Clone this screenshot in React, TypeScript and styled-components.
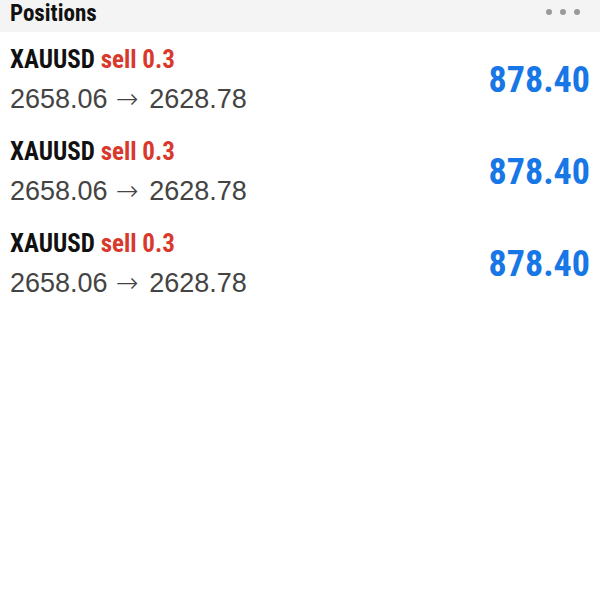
import React from "react";
import styled, { createGlobalStyle } from "styled-components";

const Global = createGlobalStyle`
  html, body { margin: 0; padding: 0; background: #ffffff; }
  body { font-family: "Liberation Sans", Arial, sans-serif; }
`;

const condensed = `"Roboto Condensed", Roboto, "Liberation Sans", sans-serif`;

const Page = styled.div`
  width: 600px;
  min-height: 600px;
  background: #ffffff;
`;

const Header = styled.div`
  height: 32px;
  background: #f4f4f4;
  display: flex;
  align-items: center;
  justify-content: space-between;
  padding: 0 10px;
  box-sizing: border-box;
`;

const Title = styled.div`
  font-family: ${condensed};
  font-stretch: 75%;
  font-weight: 700;
  font-size: 23px;
  line-height: 26px;
  color: #111;
  margin-top: -5px;
`;

const Dots = styled.div`
  display: flex;
  gap: 8px;
  margin-top: -8px;
  padding-right: 10px;
`;

const Dot = styled.span`
  width: 6px;
  height: 6px;
  border-radius: 50%;
  background: #9a9a9a;
`;

const List = styled.div`
  display: flex;
  flex-direction: column;
  padding-top: 12px;
`;

const Row = styled.div`
  height: 92px;
  display: flex;
  align-items: flex-start;
  justify-content: space-between;
  padding: 0 10px;
`;

const Info = styled.div`
  display: flex;
  flex-direction: column;
`;

const Line1 = styled.div`
  font-family: ${condensed};
  font-stretch: 75%;
  font-weight: 700;
  font-size: 25px;
  line-height: 32px;
`;

const Symbol = styled.span`
  color: #111;
`;

const Side = styled.span`
  color: #d9382c;
`;

const Line2 = styled.div`
  font-family: "Liberation Sans", Arial, sans-serif;
  font-size: 27px;
  line-height: 46px;
  color: #444;
`;

const Arrow = styled.span`
  font-family: "DejaVu Sans", sans-serif;
  font-weight: 200;
  font-size: 27px;
  margin: 0 3px 0 1px;
`;

const Profit = styled.div`
  font-family: ${condensed};
  font-stretch: 75%;
  font-weight: 700;
  font-size: 36px;
  line-height: 36px;
  color: #1877e6;
  margin-top: 18px;
`;

const rows = [0, 1, 2];

export default function App() {
  return (
    <Page>
      <Global />
      <Header>
        <Title>Positions</Title>
        <Dots>
          <Dot />
          <Dot />
          <Dot />
        </Dots>
      </Header>
      <List>
        {rows.map((i) => (
          <Row key={i}>
            <Info>
              <Line1>
                <Symbol>XAUUSD</Symbol> <Side>sell 0.3</Side>
              </Line1>
              <Line2>
                2658.06 <Arrow>→</Arrow> 2628.78
              </Line2>
            </Info>
            <Profit>878.40</Profit>
          </Row>
        ))}
      </List>
    </Page>
  );
}
